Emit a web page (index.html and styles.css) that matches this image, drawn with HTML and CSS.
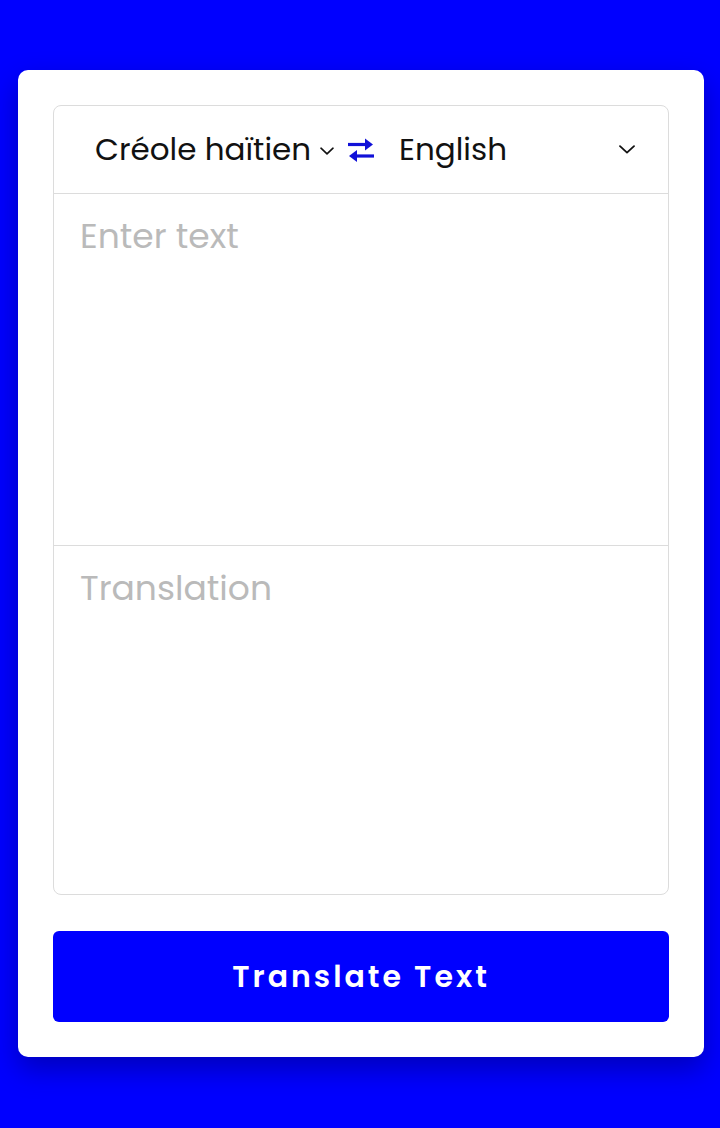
FILE: index.html
```html
<!DOCTYPE html>
<html lang="en">
<head>
<meta charset="utf-8">
<title>Translator</title>
<link rel="stylesheet" href="styles.css">
</head>
<body>
<main class="card">
  <section class="panel">
    <div class="langbar">
      <div class="select select-from">
        <span class="lang">Créole haïtien</span>
        <svg class="chev" width="14" height="8" viewBox="0 0 14 8"><path d="M1 1.2l6 5.6 6-5.6" fill="none" stroke="#111" stroke-width="1.6" stroke-linecap="round" stroke-linejoin="round"/></svg>
      </div>
      <button class="swap" aria-label="Swap languages">
        <svg width="28" height="28" viewBox="0 0 28 28"><path d="M1 8.5h18" stroke="#1111d8" stroke-width="3.2"/><path d="M18 2.5l8 6-8 6z" fill="#1111d8"/><path d="M9 20h18" stroke="#1111d8" stroke-width="3.2"/><path d="M10 14l-8 6 8 6z" fill="#1111d8"/></svg>
      </button>
      <div class="select select-to">
        <span class="lang">English</span>
        <svg class="chev" width="16" height="9" viewBox="0 0 16 9"><path d="M1 1.2l7 6.4 7-6.4" fill="none" stroke="#111" stroke-width="1.8" stroke-linecap="round" stroke-linejoin="round"/></svg>
      </div>
    </div>
    <div class="field field-input"><span class="placeholder">Enter text</span></div>
    <div class="field field-output"><span class="placeholder">Translation</span></div>
  </section>
  <button class="translate">Translate Text</button>
</main>
</body>
</html>
```
FILE: styles.css
```css
* { box-sizing: border-box; }
html, body { margin: 0; padding: 0; }
body {
  background: #0000ff;
  font-family: "Poppins", "Inter", "Open Sans", sans-serif;
  height: 1128px;
  overflow: hidden;
}
.card {
  margin: 70px 16px 0 18px;
  background: #fff;
  border-radius: 10px;
  padding: 35px;
  box-shadow: 0 12px 28px rgba(0, 0, 60, 0.35);
  display: flex;
  flex-direction: column;
  gap: 36px;
}
.panel {
  border: 1px solid #dcdcdc;
  border-radius: 8px;
  display: flex;
  flex-direction: column;
}
.langbar {
  height: 88px;
  border-bottom: 1px solid #dcdcdc;
  display: flex;
  align-items: center;
  padding: 0 33px 0 41px;
}
.select {
  display: flex;
  align-items: center;
  justify-content: space-between;
  color: #111;
  font-size: 31px;
}
.select-from { width: 239px; }
.select-to { flex: 1; }
.lang { line-height: 1; }
.chev { display: block; }
.select-from .chev { margin-top: 2px; }
.swap {
  border: 0;
  background: none;
  padding: 0;
  margin: 0 24px 0 13px;
  display: flex;
}
.field {
  padding: 22px 26px;
  font-size: 34.5px;
  line-height: 40px;
}
.field-input { height: 352px; border-bottom: 1px solid #dcdcdc; }
.field-output { height: 348px; }
.placeholder { color: #bababa; }
.translate {
  height: 91px;
  border: 0;
  border-radius: 6px;
  background: #0000ff;
  color: #fff;
  font-family: inherit;
  font-size: 30px;
  font-weight: 600;
  letter-spacing: 3px;
}
```
